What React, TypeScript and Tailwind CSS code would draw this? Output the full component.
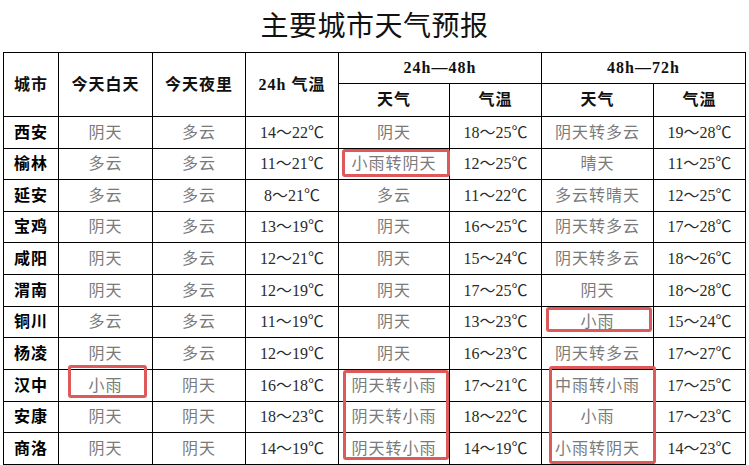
import React from "react";

type Row = { city: string; day: string; night: string; t24: string; w48: string; t48: string; w72: string; t72: string; h: string };

const rows: Row[] = [
  { city: "西安", day: "阴天", night: "多云", t24: "14～22℃", w48: "阴天", t48: "18～25℃", w72: "阴天转多云", t72: "19～28℃", h: "h-[32px]" },
  { city: "榆林", day: "多云", night: "多云", t24: "11～21℃", w48: "小雨转阴天", t48: "12～25℃", w72: "晴天", t72: "11～25℃", h: "h-[31px]" },
  { city: "延安", day: "多云", night: "多云", t24: "8～21℃", w48: "多云", t48: "11～22℃", w72: "多云转晴天", t72: "12～25℃", h: "h-[32px]" },
  { city: "宝鸡", day: "阴天", night: "多云", t24: "13～19℃", w48: "阴天", t48: "16～25℃", w72: "阴天转多云", t72: "17～28℃", h: "h-[31px]" },
  { city: "咸阳", day: "阴天", night: "多云", t24: "12～21℃", w48: "阴天", t48: "15～24℃", w72: "阴天转多云", t72: "18～26℃", h: "h-[32px]" },
  { city: "渭南", day: "阴天", night: "多云", t24: "12～19℃", w48: "阴天", t48: "17～25℃", w72: "阴天", t72: "18～28℃", h: "h-[32px]" },
  { city: "铜川", day: "多云", night: "多云", t24: "11～19℃", w48: "阴天", t48: "13～23℃", w72: "小雨", t72: "15～24℃", h: "h-[31px]" },
  { city: "杨凌", day: "阴天", night: "多云", t24: "12～19℃", w48: "阴天", t48: "16～23℃", w72: "阴天转多云", t72: "17～27℃", h: "h-[32px]" },
  { city: "汉中", day: "小雨", night: "阴天", t24: "16～18℃", w48: "阴天转小雨", t48: "17～21℃", w72: "中雨转小雨", t72: "17～25℃", h: "h-[32px]" },
  { city: "安康", day: "阴天", night: "阴天", t24: "18～23℃", w48: "阴天转小雨", t48: "18～22℃", w72: "小雨", t72: "17～23℃", h: "h-[31px]" },
  { city: "商洛", day: "阴天", night: "阴天", t24: "14～19℃", w48: "阴天转小雨", t48: "14～19℃", w72: "小雨转阴天", t72: "14～23℃", h: "h-[32px]" },
];

function HeadCell({ children, className = "" }: { children: React.ReactNode; className?: string }) {
  return (
    <div className={`flex items-center justify-center border-r border-b border-black font-bold text-[16px] tracking-[1px] text-[#111] ${className}`} style={{ fontFamily: "'Liberation Serif','Noto Sans CJK SC',serif" }}>
      {children}
    </div>
  );
}

function Cell({ children, kind, h }: { children: React.ReactNode; kind: "city" | "cn" | "temp"; h: string }) {
  const tone =
    kind === "city"
      ? "font-bold text-black tracking-[1px]"
      : kind === "cn"
      ? "text-[#7a7a7a] tracking-[1px]"
      : "text-[#2a2a2a]";
  return (
    <div
      className={`flex items-center justify-center border-r border-b border-black text-[16px] ${tone} ${h}`}
      style={{ fontFamily: "'Liberation Serif','Noto Sans CJK SC',serif" }}
    >
      {children}
    </div>
  );
}

export default function App() {
  return (
    <div className="w-[749px] h-[465px] bg-white overflow-hidden">
      <div
        className="h-[52px] flex items-center justify-center pb-[4px] text-[28px] tracking-[0.5px] text-[#111]"
        style={{ fontFamily: "'Noto Sans CJK SC','Noto Sans',sans-serif" }}
      >
        主要城市天气预报
      </div>
      <div className="relative ml-[3px] w-[743px] border-l border-t border-black grid grid-cols-[55px_94px_93px_93px_111px_92px_112px_92px] grid-rows-[31px_33px]">
        <HeadCell className="row-span-2">城市</HeadCell>
        <HeadCell className="row-span-2">今天白天</HeadCell>
        <HeadCell className="row-span-2">今天夜里</HeadCell>
        <HeadCell className="row-span-2">24h 气温</HeadCell>
        <HeadCell className="col-span-2 tracking-[0px]">24h—48h</HeadCell>
        <HeadCell className="col-span-2 tracking-[0px]">48h—72h</HeadCell>
        <HeadCell>天气</HeadCell>
        <HeadCell>气温</HeadCell>
        <HeadCell>天气</HeadCell>
        <HeadCell>气温</HeadCell>
        {rows.map((r) => (
          <React.Fragment key={r.city}>
            <Cell kind="city" h={r.h}>{r.city}</Cell>
            <Cell kind="cn" h={r.h}>{r.day}</Cell>
            <Cell kind="cn" h={r.h}>{r.night}</Cell>
            <Cell kind="temp" h={r.h}>{r.t24}</Cell>
            <Cell kind="cn" h={r.h}>{r.w48}</Cell>
            <Cell kind="temp" h={r.h}>{r.t48}</Cell>
            <Cell kind="cn" h={r.h}>{r.w72}</Cell>
            <Cell kind="temp" h={r.h}>{r.t72}</Cell>
          </React.Fragment>
        ))}
        <div className="absolute left-[338px] top-[96px] w-[108px] h-[28px] border-[3px] border-[#de5a5a] rounded-[3px]" />
        <div className="absolute left-[542px] top-[254px] w-[106px] h-[25px] border-[3px] border-[#de5a5a] rounded-[3px]" />
        <div className="absolute left-[64px] top-[312px] w-[79px] h-[33px] border-[3px] border-[#de5a5a] rounded-[3px]" />
        <div className="absolute left-[339px] top-[317px] w-[106px] h-[90px] border-[3px] border-[#de5a5a] rounded-[3px]" />
        <div className="absolute left-[545px] top-[313px] w-[107px] h-[98px] border-[3px] border-[#de5a5a] rounded-[3px]" />
      </div>
    </div>
  );
}
